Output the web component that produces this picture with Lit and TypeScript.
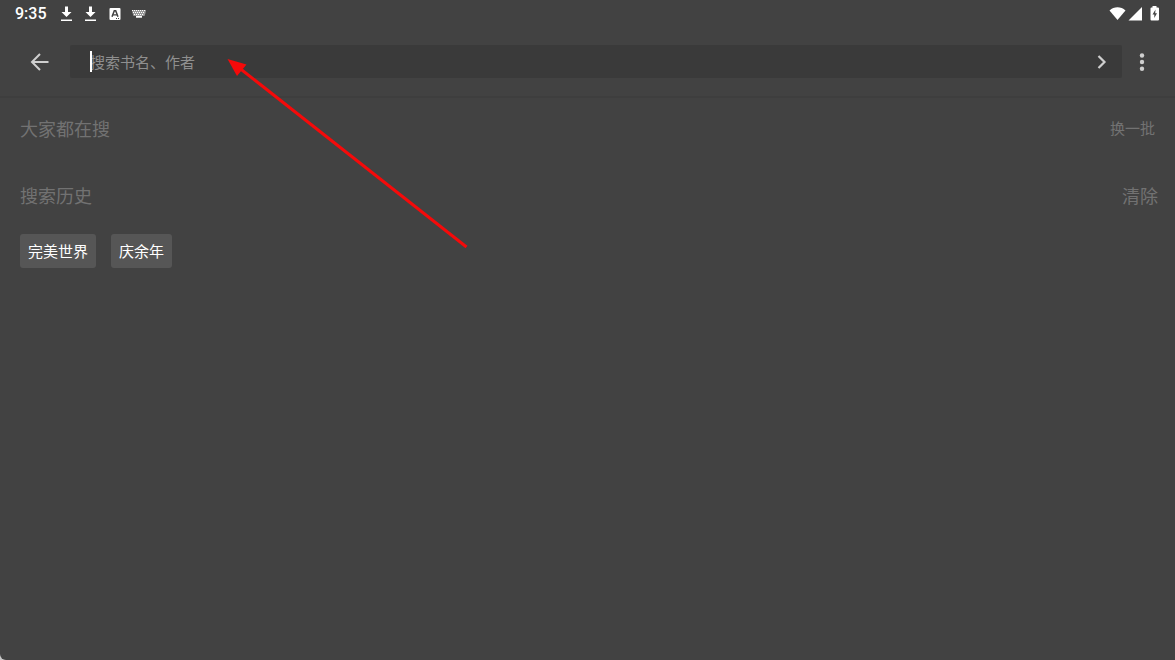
import { LitElement, html, css } from "lit";
import { customElement, state } from "lit/decorators.js";

@customElement("status-bar")
class StatusBar extends LitElement {
  static styles = css`
    :host {
      display: flex;
      align-items: center;
      justify-content: space-between;
      height: 28px;
      padding: 0 15px;
      color: #fff;
      font: 500 16px/28px Roboto, sans-serif;
    }
    .group {
      display: flex;
      align-items: center;
    }
    .notices {
      gap: 8px;
      margin-left: 12px;
    }
    .system {
      gap: 1px;
    }
    .battery {
      margin-left: 7px;
    }
    svg {
      display: block;
      fill: #fff;
    }
  `;

  private download() {
    return html`<svg width="16" height="16" viewBox="0 0 16 16" aria-hidden="true">
      <path d="M6 .5h3v5.500h3.500L7.500 11 2.500 6H6z" />
      <path d="M2 13.500h11V15H2z" />
    </svg>`;
  }

  render() {
    return html`
      <div class="group">
        <time>9:35</time>
        <div class="group notices">
          ${this.download()} ${this.download()}
          <svg width="16" height="16" viewBox="0 0 16 16" aria-hidden="true">
            <rect x="2.500" y="2" width="11" height="12" rx="1" />
            <path d="M5 10.800 7.300 4.700h1.400L11 10.800" fill="none" stroke="#424242" stroke-width="1.500" />
            <path d="M6 8.300h4v1.200H6zM9 12h1v1H9zM11 12h1v1h-1z" fill="#424242" />
          </svg>
          <svg width="16" height="16" viewBox="0 0 16 16" aria-hidden="true">
            <path d="M1 4h14l-.5 3-1 3H11v2H5v-2H2.500l-1-3z" fill="#9a9a9a" />
            <g fill="none" stroke="#fff" stroke-dasharray="1 1">
              <path d="M1 4.500h14M2 6.500h12M3 8.500h10" />
            </g>
            <path d="M5 10h6v1.500H5z" />
          </svg>
        </div>
      </div>
      <div class="group system">
        <svg width="18" height="16" viewBox="0 0 18 16" aria-hidden="true">
          <path d="M.5 4.400C5 .2 12 .2 16.500 4.400L8.500 14z" />
        </svg>
        <svg width="14" height="16" viewBox="0 0 14 16" aria-hidden="true">
          <path d="M14 1v13.500H.5z" />
        </svg>
        <svg class="battery" width="10" height="16" viewBox="0 0 10 16" aria-hidden="true">
          <path d="M2.500 0h4v1.500H8q1 0 1 1v11q0 1-1 1H1.500q-1 0-1-1v-11q0-1 1-1h1z" />
          <path d="M5.500 3.500l-3 5h1.800V12L7 7.200H5.200z" fill="#424242" />
        </svg>
      </div>
    `;
  }
}

@customElement("app-root")
class AppRoot extends LitElement {
  @state() private history = ["完美世界", "庆余年"];

  static styles = css`
    :host {
      display: block;
      position: relative;
      min-height: 100vh;
      background: #c8c8c8;
      font-family: "Noto Sans CJK SC", sans-serif;
    }
    .screen {
      min-height: 100vh;
      background: #424242;
      border-bottom-left-radius: 6px;
    }
    button {
      margin: 0;
      padding: 0;
      border: 0;
      background: none;
      color: inherit;
      font: inherit;
      cursor: pointer;
    }
    svg {
      display: block;
    }
    .toolbar {
      display: flex;
      align-items: center;
      padding: 17px 21px 18px 28px;
      border-bottom: 2px solid #3e3e3e;
    }
    .back {
      margin-right: 18px;
    }
    .search {
      position: relative;
      display: flex;
      flex: 1;
      align-items: center;
      padding: 0 8px 0 20px;
      background: #3a3a3a;
      border-radius: 2px;
    }
    .field {
      flex: 1;
      min-width: 0;
      height: 33px;
      padding: 0;
      border: 0;
      outline: 0;
      background: none;
      color: #fff;
      caret-color: transparent;
      font: 15px/33px "Noto Sans CJK SC", sans-serif;
    }
    .field::placeholder {
      color: #8f8f8f;
      opacity: 1;
    }
    .caret {
      position: absolute;
      left: 20px;
      top: 6px;
      width: 2px;
      height: 21px;
      background: #fff;
    }
    .more {
      margin-left: 8px;
    }
    .section {
      display: flex;
      align-items: center;
      justify-content: space-between;
      padding: 0 17px 0 20px;
      color: #727272;
    }
    .popular {
      padding-top: 17px;
      padding-right: 20px;
    }
    .recent {
      padding-top: 41px;
    }
    h2 {
      margin: 0;
      font-size: 18px;
      font-weight: 400;
      line-height: 26px;
    }
    .refresh {
      font-size: 15px;
      line-height: 24px;
    }
    .clear {
      font-size: 18px;
      line-height: 26px;
    }
    .chips {
      display: flex;
      flex-wrap: wrap;
      gap: 15px;
      padding: 26px 20px;
    }
    .chip {
      padding: 0 8px;
      background: #565656;
      border-radius: 3px;
      color: #fff;
      font-size: 15px;
      line-height: 34px;
    }
    .pointer {
      position: absolute;
      left: 0;
      top: 0;
      pointer-events: none;
    }
  `;

  render() {
    return html`
      <div class="screen">
        <status-bar></status-bar>
        <header class="toolbar">
          <button class="back" aria-label="返回">
            <svg width="24" height="24" viewBox="0 0 24 24" fill="none" stroke="#cfcfcf" stroke-width="2">
              <path d="M20.500 12H4.500M12 4 4 12l8 8" />
            </svg>
          </button>
          <form class="search" @submit=${(e: Event) => e.preventDefault()}>
            <input class="field" type="text" aria-label="搜索" placeholder="搜索书名、作者" />
            <span class="caret"></span>
            <button type="submit" aria-label="提交">
              <svg width="24" height="24" viewBox="0 0 24 24" fill="none" stroke="#cfcfcf" stroke-width="2.200">
                <path d="M8.500 6l6 6-6 6" />
              </svg>
            </button>
          </form>
          <button class="more" aria-label="更多">
            <svg width="24" height="24" viewBox="0 0 24 24" fill="#cfcfcf">
              <circle cx="12" cy="5.500" r="2.200" />
              <circle cx="12" cy="12" r="2.200" />
              <circle cx="12" cy="18.700" r="2.200" />
            </svg>
          </button>
        </header>
        <main>
          <section class="section popular">
            <h2>大家都在搜</h2>
            <button class="refresh">换一批</button>
          </section>
          <section class="section recent">
            <h2>搜索历史</h2>
            <button class="clear" @click=${() => (this.history = [])}>清除</button>
          </section>
          <div class="chips">
            ${this.history.map((name) => html`<button class="chip">${name}</button>`)}
          </div>
        </main>
      </div>
      <svg class="pointer" width="480" height="260" viewBox="0 0 480 260" aria-hidden="true">
        <path d="M240 68.500 466.500 247" stroke="#f50a0a" stroke-width="3" />
        <path d="M227.500 59 246.500 64.500 237 76z" fill="#f50a0a" />
      </svg>
    `;
  }
}
